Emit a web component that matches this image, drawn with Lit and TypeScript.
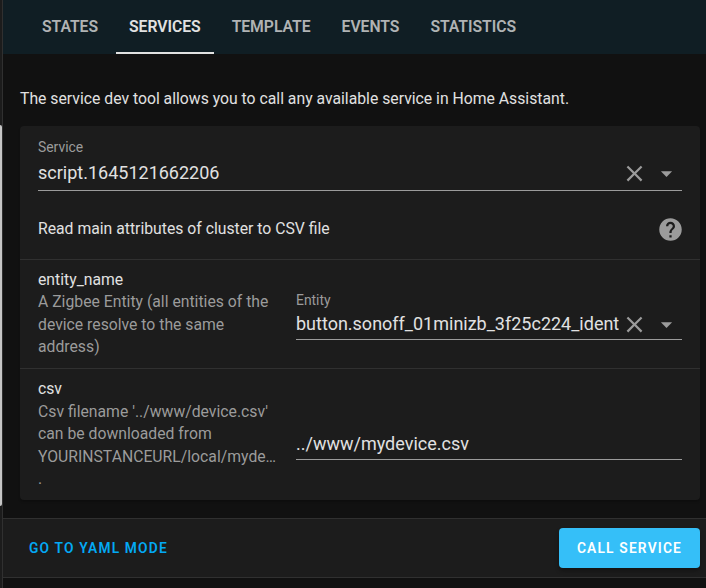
import { LitElement, html, css } from "lit";
import { customElement, property, state } from "lit/decorators.js";
import { classMap } from "lit/directives/class-map.js";

const CLOSE =
  "M19,6.41L17.59,5L12,10.59L6.41,5L5,6.41L10.59,12L5,17.59L6.41,19L12,13.41L17.59,19L19,17.59L13.41,12L19,6.41Z";
const MENU_DOWN = "M7,10L12,15L17,10H7Z";
const HELP_CIRCLE =
  "M15.07,11.25L14.17,12.17C13.45,12.89 13,13.5 13,15H11V14.5C11,13.39 11.45,12.39 12.17,11.67L13.41,10.41C13.78,10.05 14,9.55 14,9C14,7.89 13.1,7 12,7A2,2 0 0,0 10,9H8A4,4 0 0,1 12,5A4,4 0 0,1 16,9C16,9.88 15.64,10.67 15.07,11.25M13,19H11V17H13M12,2A10,10 0 0,0 2,12A10,10 0 0,0 12,22A10,10 0 0,0 22,12C22,6.47 17.5,2 12,2Z";

@customElement("svg-icon")
class SvgIcon extends LitElement {
  @property() path = "";

  static styles = css`
    :host {
      display: block;
      flex: none;
      width: 27px;
      height: 27px;
    }
    .glyph {
      display: block;
      width: 100%;
      height: 100%;
      fill: #9b9b9b;
    }
  `;

  render() {
    return html`<svg class="glyph" viewBox="0 0 24 24"><path d=${this.path}></path></svg>`;
  }
}

@customElement("text-field")
class TextField extends LitElement {
  @property() label = "";
  @property() value = "";
  @property({ type: Boolean }) picker = false;
  @property({ type: Boolean }) dense = false;

  static styles = css`
    :host {
      display: block;
      min-width: 0;
      border-bottom: 1px solid #9b9b9b;
    }
    .label {
      height: 18px;
      font-size: 13.9px;
      line-height: 18px;
      color: #9b9b9b;
      white-space: nowrap;
    }
    .line {
      display: flex;
      align-items: center;
      height: 34px;
    }
    .line.dense {
      height: 30px;
    }
    .value {
      flex: 1;
      min-width: 0;
      margin-bottom: 2px;
      overflow: hidden;
      white-space: nowrap;
      font-size: 18px;
      line-height: 27px;
      color: #e1e1e1;
    }
    .clear {
      margin-right: 5px;
      margin-left: 2px;
    }
    .open {
      margin-right: 2px;
    }
  `;

  render() {
    return html`
      <div class="label">${this.label}</div>
      <div class=${classMap({ line: true, dense: this.dense })}>
        <div class="value">${this.value}</div>
        ${this.picker
          ? html`<svg-icon class="clear" .path=${CLOSE}></svg-icon
              ><svg-icon class="open" .path=${MENU_DOWN}></svg-icon>`
          : ""}
      </div>
    `;
  }
}

@customElement("app-root")
class AppRoot extends LitElement {
  @state() private active = "Services";

  private tabs = ["States", "Services", "Template", "Events", "Statistics"];

  static styles = css`
    :host {
      display: flex;
      height: 588px;
      overflow: hidden;
      background: #111111;
      color: #e1e1e1;
      font-family: Roboto, "Noto Sans", sans-serif;
      font-size: 15.75px;
      line-height: 22.5px;
    }
    .edge {
      flex: none;
      box-sizing: border-box;
      width: 3px;
      padding-top: 125px;
      border-right: 1px solid #303030;
      background: #1c1c1c;
    }
    .thumb {
      height: 381px;
      background: #c6c6c6;
      border-radius: 0 2px 2px 0;
    }
    .page {
      flex: 1;
      min-width: 0;
      display: flex;
      flex-direction: column;
    }
    .tabs {
      display: flex;
      gap: 4px;
      box-sizing: border-box;
      height: 54px;
      padding-left: 25.5px;
      background: #101e24;
    }
    .tab {
      box-sizing: border-box;
      height: 54px;
      padding: 0 13.5px;
      border-bottom: 2px solid transparent;
      line-height: 53px;
      font-weight: 600;
      letter-spacing: -0.04px;
      text-transform: uppercase;
      color: #b0b3b4;
    }
    .tab.active {
      color: #e1e1e1;
      border-color: #e1e1e1;
    }
    .intro {
      margin: 0;
      padding: 33px 17px 16px;
      height: 23px;
      line-height: 23px;
      white-space: nowrap;
    }
    .card {
      display: flex;
      flex-direction: column;
      box-sizing: border-box;
      height: 374px;
      margin: 0 6px 0 17px;
      border-radius: 4px;
      background: #1c1c1c;
      box-shadow: 0 2px 2px rgba(0, 0, 0, 0.2);
    }
    .service {
      padding: 12px 18px 0;
    }
    .summary {
      display: flex;
      align-items: center;
      justify-content: space-between;
      height: 68px;
      padding: 0 16px 0 18px;
    }
    .summary-text {
      margin-top: 8px;
    }
    .help {
      margin-top: 8px;
    }
    .row {
      display: grid;
      grid-template-columns: 240px 386px;
      column-gap: 18px;
      box-sizing: border-box;
      padding: 9px 18px 0;
      border-top: 1px solid #303030;
    }
    .row.entity {
      height: 109px;
    }
    .row.file {
      height: 132px;
    }
    .entity-field {
      margin-top: 22px;
      align-self: start;
    }
    .file-field {
      margin-top: 33px;
      align-self: start;
    }
    .name {
      height: 22px;
      line-height: 22px;
    }
    .row.file .name {
      height: 22.8px;
    }
    .text {
      color: #9b9b9b;
    }
    .footer {
      display: flex;
      align-items: center;
      justify-content: space-between;
      box-sizing: border-box;
      height: 60px;
      margin-top: 18px;
      padding: 0 6px 0 26px;
      border-top: 1px solid #303030;
      border-bottom: 1px solid #303030;
      background: #1c1c1c;
    }
    .mode,
    .call {
      border: none;
      font: 600 13.78px/40px Roboto, sans-serif;
      letter-spacing: 1.18px;
      text-transform: uppercase;
      white-space: nowrap;
    }
    .mode {
      padding: 0;
      background: none;
      color: #03a9f4;
    }
    .call {
      width: 141px;
      height: 40px;
      padding: 0;
      border-radius: 4px;
      background: #35bff8;
      color: #ffffff;
      box-shadow: 0 3px 4px rgba(0, 0, 0, 0.3);
    }
  `;

  render() {
    return html`
      <div class="edge"><div class="thumb"></div></div>
      <div class="page">
        <nav class="tabs">
          ${this.tabs.map(
            (t) => html`<div
              class=${classMap({ tab: true, active: t === this.active })}
              @click=${() => (this.active = t)}
            >${t}</div>`
          )}
        </nav>
        <p class="intro">The service dev tool allows you to call any available service in Home Assistant.</p>
        <section class="card">
          <div class="service">
            <text-field label="Service" value="script.1645121662206" picker></text-field>
          </div>
          <div class="summary">
            <span class="summary-text">Read main attributes of cluster to CSV file</span>
            <svg-icon class="help" .path=${HELP_CIRCLE}></svg-icon>
          </div>
          <div class="row entity">
            <div>
              <div class="name">entity_name</div>
              <div class="text">A Zigbee Entity (all entities of the device resolve to the same address)</div>
            </div>
            <text-field
              class="entity-field"
              label="Entity"
              value="button.sonoff_01minizb_3f25c224_ident"
              picker
              dense
            ></text-field>
          </div>
          <div class="row file">
            <div>
              <div class="name">csv</div>
              <div class="text">Csv filename '../www/device.csv' can be downloaded from YOURINSTANCEURL/local/myde… .</div>
            </div>
            <text-field class="file-field" value="../www/mydevice.csv" dense></text-field>
          </div>
        </section>
        <footer class="footer">
          <button class="mode">Go to YAML mode</button>
          <button class="call">Call service</button>
        </footer>
      </div>
    `;
  }
}
